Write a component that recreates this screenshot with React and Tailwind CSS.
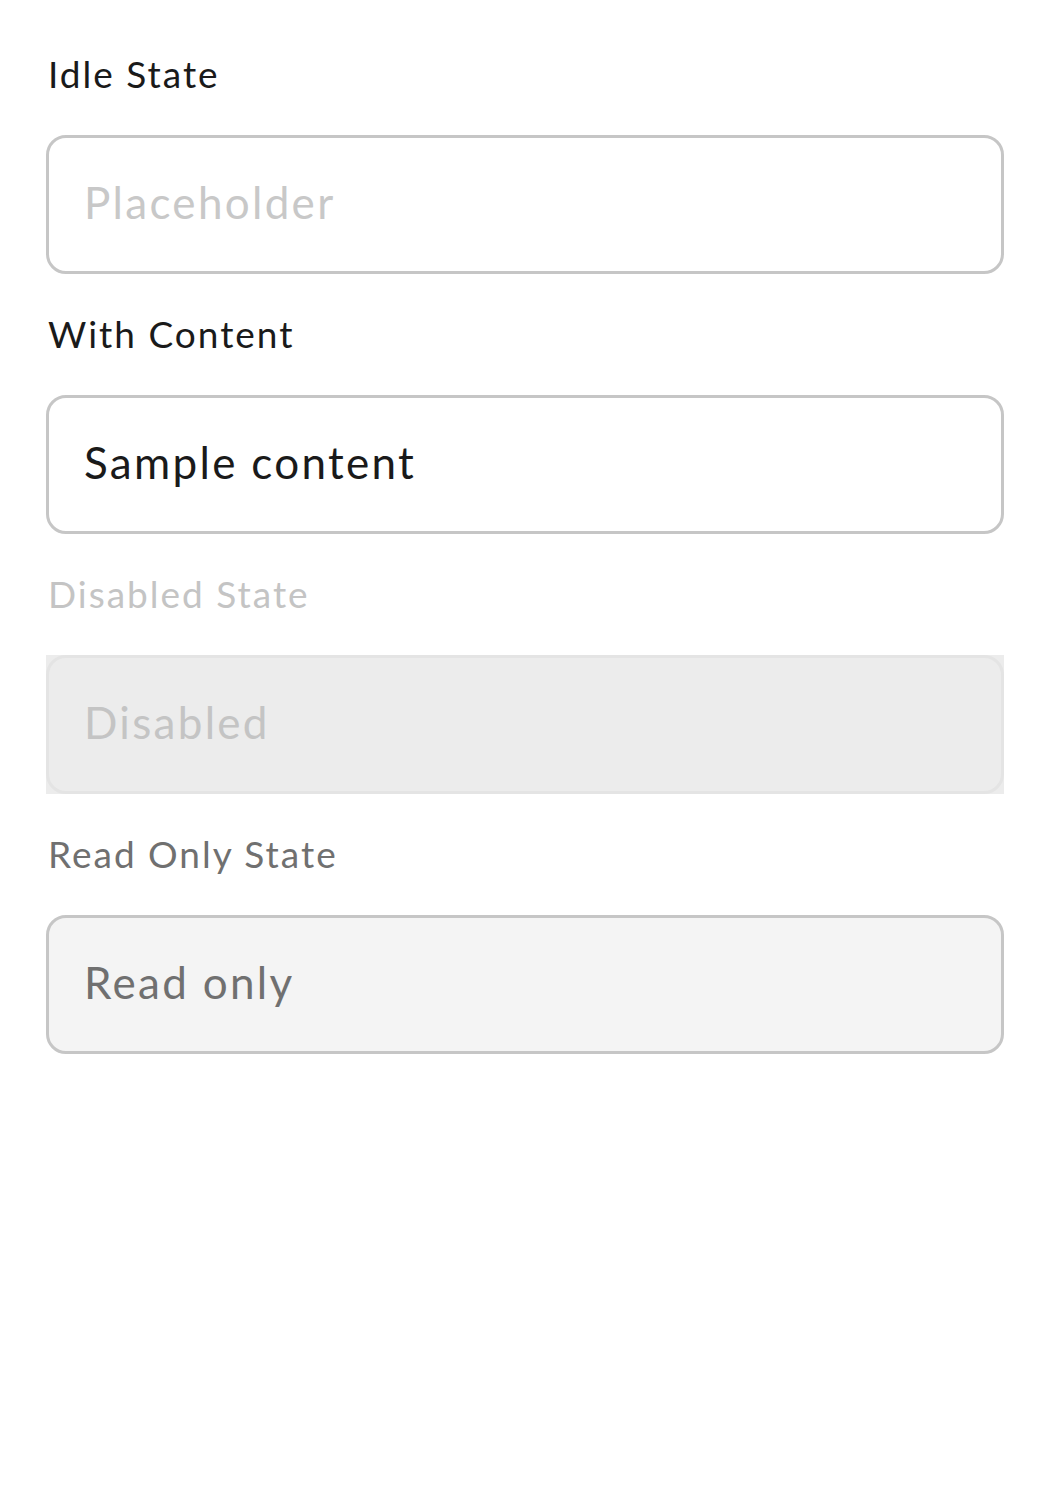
export default function App() {
  const label = "text-[37px] leading-[48px] tracking-[2px] pl-[2px]"
  const field = "h-[139px] rounded-[20px] border-[3px] flex items-center px-[35px] pb-[4px]"
  const value = "text-[44px] leading-[53px] tracking-[2.3px]"

  return (
    <div
      className="w-[1050px] min-h-[1500px] bg-white px-[46px] pt-[50px] flex flex-col gap-[36px]"
      style={{ fontFamily: "Lato, 'Open Sans', sans-serif" }}
    >
      {/* Idle */}
      <div className="flex flex-col gap-[37px]">
        <label className={`${label} text-[#1a1a1a]`}>Idle State</label>
        <div className={`${field} border-[#c6c6c6] bg-white`}>
          <span className={`${value} text-[#c8c8c8]`}>Placeholder</span>
        </div>
      </div>

      {/* With content */}
      <div className="flex flex-col gap-[37px]">
        <label className={`${label} text-[#1a1a1a]`}>With Content</label>
        <div className={`${field} border-[#c6c6c6] bg-white`}>
          <span className={`${value} text-[#1a1a1a]`}>Sample content</span>
        </div>
      </div>

      {/* Disabled */}
      <div className="flex flex-col gap-[37px]">
        <label className={`${label} text-[#c4c4c4]`}>Disabled State</label>
        <div className="bg-[#ececec]">
          <div className={`${field} border-[#e4e4e4]`}>
            <span className={`${value} text-[#c4c4c4]`}>Disabled</span>
          </div>
        </div>
      </div>

      {/* Read only */}
      <div className="flex flex-col gap-[37px]">
        <label className={`${label} text-[#707070]`}>Read Only State</label>
        <div className={`${field} border-[#c6c6c6] bg-[#f4f4f4]`}>
          <span className={`${value} text-[#707070]`}>Read only</span>
        </div>
      </div>
    </div>
  )
}
